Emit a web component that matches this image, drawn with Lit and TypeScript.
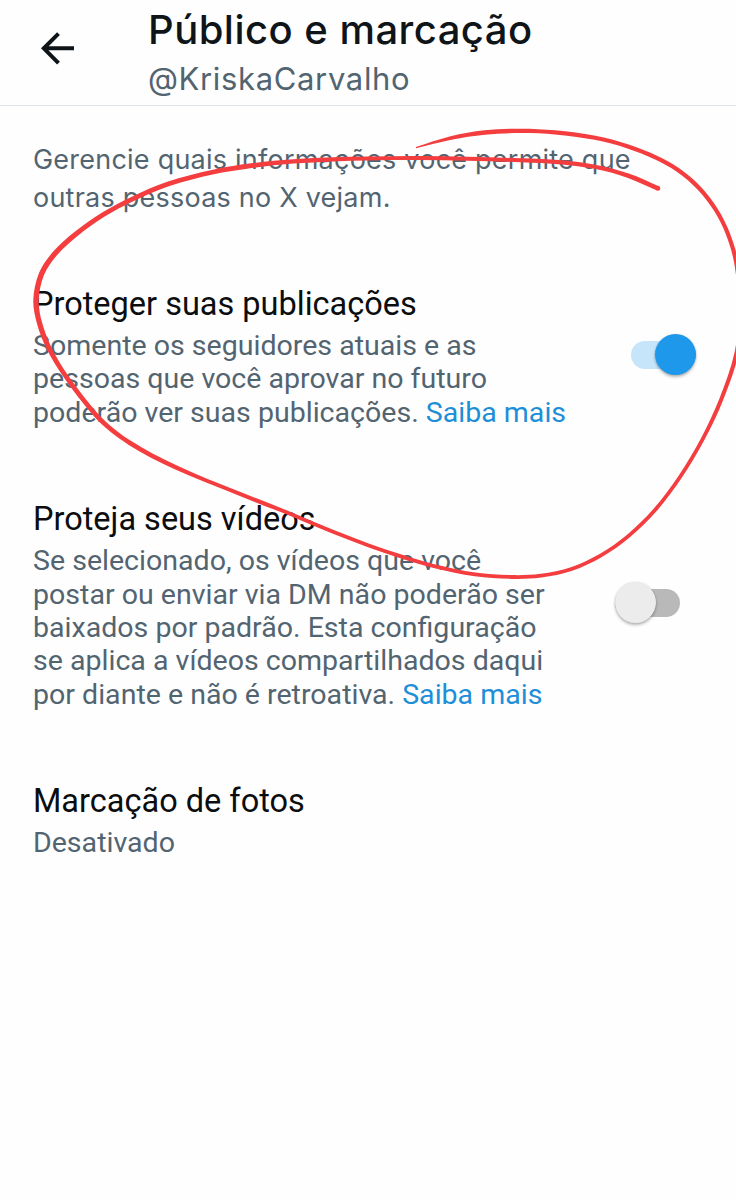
import { LitElement, html, css, svg } from "lit";
import { customElement, property } from "lit/decorators.js";

type InkPoint = [number, number, number];

// Freehand marker stroke: x, y and half of the line width at each point.
const INK: InkPoint[] = [
  [416, 147.6, 0.6], [451, 138, 1.8], [484.7, 132.5, 2.2], [521, 130.9, 2.2], [555, 132.4, 2.1],
  [595, 137.8, 2.1], [628, 146.5, 2.1], [656, 157.6, 2.1], [678, 170, 2.1], [699, 188, 2.1],
  [716, 210, 2.1], [728, 234, 2.1], [736.3, 263, 2.1], [740.5, 307, 2], [736.5, 353, 2],
  [721, 400, 2], [702.8, 438.8, 1.9], [680, 477, 1.9], [655, 510, 1.9], [628, 536.4, 1.9],
  [601, 555.4, 1.9], [571.5, 569, 1.9], [541, 575.7, 1.9], [511.5, 577, 1.9], [475, 574.4, 1.9],
  [435, 566.4, 1.9], [401, 556.4, 1.9], [368, 545.2, 1.9], [333, 531.8, 1.9], [293, 515, 1.9],
  [246.7, 496.6, 2], [205, 480, 2], [175, 467, 2.1], [151, 455.3, 2.2], [130, 443, 2.3],
  [112.5, 430.5, 2.4], [95, 414, 2.4], [66, 376.5, 2.4], [49, 348, 2.5], [39.5, 323, 2.6],
  [36, 300, 2.7], [41.5, 274, 2.7], [55, 253.5, 2.6], [76, 234, 2.5], [103, 214.8, 2.4],
  [133.3, 198.6, 2.4], [168, 184, 2.4], [213.3, 172, 2.4], [253.3, 165.4, 2.4], [293.3, 161.4, 2.2],
  [333.3, 159.3, 2.1], [368, 158.5, 2], [418, 158.1, 2], [468, 158.8, 2], [521.3, 160.3, 2],
  [561.3, 162.4, 2.1], [594.7, 166.8, 2.1], [628, 175.6, 2.2], [658, 188.4, 2.3],
];

function dist(p: number[], q: number[]): number {
  return Math.hypot(p[0] - q[0], p[1] - q[1]);
}

function curve(points: number[][]): string {
  const last = points.length - 1;
  const tangents = points.map((b, i) => {
    const a = points[Math.max(0, i - 1)];
    const c = points[Math.min(last, i + 1)];
    const len = dist(a, b) + dist(b, c);
    return [(c[0] - a[0]) / len, (c[1] - a[1]) / len];
  });
  let d = "";
  for (let i = 0; i < last; i++) {
    const b = points[i];
    const c = points[i + 1];
    const k = dist(b, c) / 3;
    const nums = [
      b[0] + tangents[i][0] * k, b[1] + tangents[i][1] * k,
      c[0] - tangents[i + 1][0] * k, c[1] - tangents[i + 1][1] * k,
      c[0], c[1],
    ];
    d += "C" + nums.map((n) => n.toFixed(2)).join(" ");
  }
  return d;
}

function ribbon(ink: InkPoint[]): string {
  const left: number[][] = [];
  const right: number[][] = [];
  ink.forEach(([x, y, r], i) => {
    const p = ink[Math.max(0, i - 1)];
    const n = ink[Math.min(ink.length - 1, i + 1)];
    const len = dist(n, p);
    const nx = (-(n[1] - p[1]) / len) * r;
    const ny = ((n[0] - p[0]) / len) * r;
    left.push([x + nx, y + ny]);
    right.push([x - nx, y - ny]);
  });
  right.reverse();
  return `M${left[0].join(" ")}${curve(left)}L${right[0].join(" ")}${curve(right)}Z`;
}

@customElement("toggle-switch")
export class ToggleSwitch extends LitElement {
  @property({ type: Boolean, reflect: true }) on = false;

  static styles = css`
    :host { display: flex; align-items: center; width: 65px; height: 41px; }
    .track {
      display: flex; align-items: center; width: 65px; height: 28px;
      border-radius: 14px; background: #b9b9b9;
    }
    .thumb {
      flex: none; width: 41px; height: 41px; border-radius: 50%; background: #ececec;
      box-shadow: 0 2px 3px rgba(0, 0, 0, 0.28), 0 0 2px rgba(0, 0, 0, 0.12);
    }
    :host([on]) .track { justify-content: flex-end; background: #c6e5fa; }
    :host([on]) .thumb { background: #1d98eb; }
  `;

  render() {
    return html`<div class="track"><div class="thumb"></div></div>`;
  }
}

@customElement("app-root")
export class AppRoot extends LitElement {
  static styles = css`
    :host {
      display: block; position: relative; width: 736px; height: 1200px; overflow: hidden;
      background: #fefefe; color: #0f1419; font-family: Roboto, "Liberation Sans", sans-serif;
    }
    header {
      display: flex; box-sizing: border-box; height: 106px; padding-left: 40px;
      border-bottom: 1px solid #dfe5e8; font-family: Inter, Roboto, sans-serif;
    }
    .back { width: 34px; height: 34px; margin: 31px 74px 0 0; }
    .heading { display: flex; flex-direction: column; padding-top: 6px; }
    h1, h2, p { margin: 0; font-weight: 400; white-space: nowrap; }
    h1 { font-size: 40px; line-height: 48px; font-weight: 500; letter-spacing: 0.47px; }
    .handle { margin-top: 1px; font-size: 31px; line-height: 48px; letter-spacing: 0.65px; color: #536471; }
    main { display: flex; flex-direction: column; }
    .intro {
      padding: 35px 0 0 33px; font: 27px/38px Inter, Roboto, sans-serif;
      letter-spacing: 0.23px; color: #536471;
    }
    .row { display: flex; justify-content: space-between; padding-left: 33px; }
    .protect { margin-top: 67px; padding-right: 40px; }
    .videos { margin-top: 70px; padding-right: 56px; }
    .photos { margin-top: 70px; }
    h2 { font-size: 32.5px; line-height: 40px; color: #0b0d0f; }
    .desc { margin-top: 5px; font-size: 28.55px; line-height: 33.4px; color: #536471; }
    .link { color: #1d8fd8; }
    .protect toggle-switch { margin-top: 50px; }
    .videos toggle-switch { margin-top: 83px; }
    .ink { position: absolute; inset: 0; pointer-events: none; }
  `;

  render() {
    return html`
      <header>
        <svg class="back" viewBox="0 0 34 34" fill="none" stroke="#0f1419" stroke-width="4">
          <path d="M18.5 2.6 3.8 17.3l14.7 14.8M3.8 17.3H34" />
        </svg>
        <div class="heading">
          <h1>Público e marcação</h1>
          <p class="handle">@KriskaCarvalho</p>
        </div>
      </header>
      <main>
        <p class="intro">Gerencie quais informações você permite que<br />outras pessoas no X vejam.</p>
        <section class="row protect">
          <div>
            <h2>Proteger suas publicações</h2>
            <p class="desc">
              Somente os seguidores atuais e as<br />pessoas que você aprovar no futuro<br />poderão ver suas
              publicações. <span class="link">Saiba mais</span>
            </p>
          </div>
          <toggle-switch on></toggle-switch>
        </section>
        <section class="row videos">
          <div>
            <h2>Proteja seus vídeos</h2>
            <p class="desc">
              Se selecionado, os vídeos que você<br />postar ou enviar via DM não poderão ser<br />baixados por
              padrão. Esta configuração<br />se aplica a vídeos compartilhados daqui<br />por diante e não é
              retroativa. <span class="link">Saiba mais</span>
            </p>
          </div>
          <toggle-switch></toggle-switch>
        </section>
        <section class="row photos">
          <div>
            <h2>Marcação de fotos</h2>
            <p class="desc">Desativado</p>
          </div>
        </section>
      </main>
      <svg class="ink" width="736" height="1200" viewBox="0 0 736 1200" fill="#f43d3e">
        ${svg`<path d=${ribbon(INK)} /><circle cx="658" cy="188.4" r="2.3" />`}
      </svg>
    `;
  }
}
